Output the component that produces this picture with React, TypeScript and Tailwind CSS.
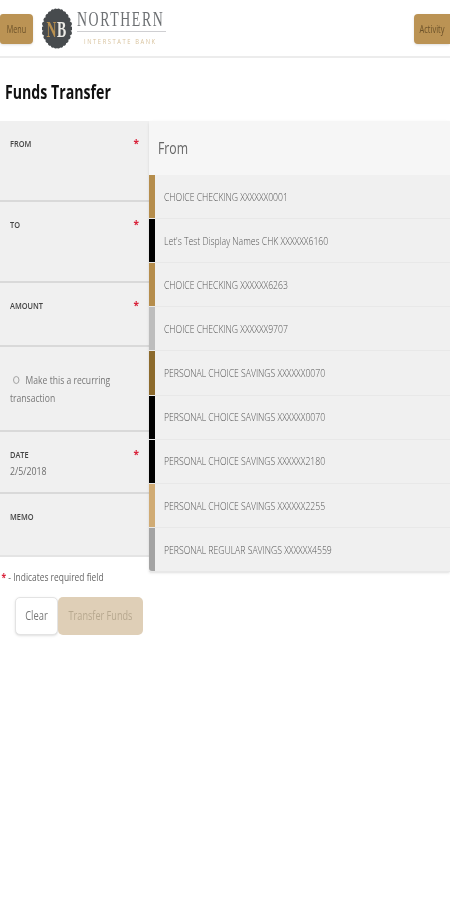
import React from 'react';

const accounts = [
  { name: 'CHOICE CHECKING XXXXXX0001', bar: 'bg-[#b58d4c]' },
  { name: "Let's Test Display Names CHK XXXXXX6160", bar: 'bg-black' },
  { name: 'CHOICE CHECKING XXXXXX6263', bar: 'bg-[#b58d4c]' },
  { name: 'CHOICE CHECKING XXXXXX9707', bar: 'bg-[#bdbdbd]' },
  { name: 'PERSONAL CHOICE SAVINGS XXXXXX0070', bar: 'bg-[#8c6a2c]' },
  { name: 'PERSONAL CHOICE SAVINGS XXXXXX0070', bar: 'bg-black' },
  { name: 'PERSONAL CHOICE SAVINGS XXXXXX2180', bar: 'bg-black' },
  { name: 'PERSONAL CHOICE SAVINGS XXXXXX2255', bar: 'bg-[#d0ab74]' },
  { name: 'PERSONAL REGULAR SAVINGS XXXXXX4559', bar: 'bg-[#a3a3a3]' },
];

// scalloped oval outline of the badge
const badgePath = () => {
  const count = 26;
  const points = Array.from({ length: count }, (_, i) => {
    const a = (i / count) * Math.PI * 2 - Math.PI / 2;
    const x = 15 + 13.6 * Math.cos(a);
    const y = 20.5 + 19.6 * Math.sin(a);
    return `${x.toFixed(2)} ${y.toFixed(2)}`;
  });
  return `M${points[0]} ` + [...points.slice(1), points[0]].map(p => `A2.4 2.4 0 0 1 ${p}`).join(' ') + 'Z';
};

const Logo = () => (
  <div className="flex items-start">
    <svg width="30" height="41" viewBox="0 0 30 41" className="shrink-0">
      <path d={badgePath()} fill="#474b4e" />
      <g fontFamily="'Liberation Serif', serif" fontSize="23" fontWeight="bold">
        <text transform="translate(4.500 28.500) scale(0.6 1)" fill="#b8904f">N</text>
        <text transform="translate(15 28.500) scale(0.6 1)" fill="#ecebe6">B</text>
      </g>
    </svg>
    <div className="w-[89px] ml-[5px] pt-[1px]">
      <div className="h-[20px] origin-left scale-x-[0.66] font-['Liberation_Serif',serif] text-[21px] leading-[20px] tracking-[2.4px] text-[#6d7073] whitespace-nowrap">
        NORTHERN
      </div>
      <div className="w-full h-px bg-[#cfcfd2] mt-[2px]" />
      <div className="ml-[7px] mt-[4px] h-[9px] origin-left scale-x-[0.72] font-['Open_Sans',sans-serif] text-[8px] leading-[9px] tracking-[2.2px] text-[#d8c39e] whitespace-nowrap">
        INTERSTATE BANK
      </div>
    </div>
  </div>
);

const Field = ({
  label,
  required,
  value,
  className,
}: {
  label: string;
  required?: boolean;
  value?: string;
  className: string;
}) => (
  <div className={`bg-[#f0f0f0] border-b-2 border-[#d9d9d9] pl-[10px] pr-[10px] pt-[16px] ${className}`}>
    <div className="flex justify-between">
      <span className="origin-left scale-x-[0.78] text-[9.5px] leading-[14px] font-semibold text-[#444]">{label}</span>
      {required && <span className="text-[10px] leading-[12px] font-bold text-[#d9223a]">*</span>}
    </div>
    {value && (
      <div className="-mt-[1px] origin-left scale-x-[0.8] text-[11px] leading-[20px] text-[#707070]">{value}</div>
    )}
  </div>
);

export default function App() {
  return (
    <div className="min-h-[900px] bg-white font-['Open_Sans',sans-serif] blur-[0.4px]">
      <header className="h-[58px] border-b-2 border-[#ececec] pt-[14px] flex justify-between items-start">
        <div className="flex items-start gap-[9px]">
          <button className="w-[33px] h-[30px] rounded-r-[4px] rounded-l-[3px] bg-[#bb9354] text-[#6b5129] shadow-sm">
            <span className="block scale-x-[0.72] text-[10px]">Menu</span>
          </button>
          <div className="-mt-[6px]">
            <Logo />
          </div>
        </div>
        <button className="w-[36px] h-[30px] rounded-l-[4px] bg-[#bb9354] text-[#6b5129] shadow-sm">
          <span className="block scale-x-[0.75] text-[10px]">Activity</span>
        </button>
      </header>

      <h1 className="ml-[5px] mt-[22px] h-[41px] origin-left scale-x-[0.745] text-[19px] leading-[25px] font-bold text-[#111]">
        Funds Transfer
      </h1>

      <div className="flex items-start">
        <div className="w-[149px] shrink-0">
          <Field label="FROM" required className="h-[81px]" />
          <Field label="TO" required className="h-[81px]" />
          <Field label="AMOUNT" required className="h-[64px]" />
          <div className="h-[85px] bg-[#f0f0f0] border-b-2 border-[#d9d9d9] pl-[10px] pt-[24px] overflow-hidden">
            <div className="w-[170px] origin-left scale-x-[0.78] text-[11px] leading-[18px] text-[#777]">
              <span className="inline-block w-[8px] h-[8px] rounded-full border border-[#999] ml-[4px] mr-[8px]" />
              Make this a recurring
              <br />
              transaction
            </div>
          </div>
          <Field label="DATE" required value="2/5/2018" className="h-[62px]" />
          <Field label="MEMO" className="h-[63px] border-[#e4e4e4]" />

          <div className="pl-[2px] mt-[13px] w-[170px] origin-left scale-x-[0.8] text-[10.5px] leading-[14px] text-[#666]">
            <span className="text-[#d9223a] font-bold">*</span> - Indicates required field
          </div>
          <div className="flex pl-[15px] mt-[13px]">
            <button className="w-[43px] h-[38px] rounded-[5px] bg-white border border-[#e3e3e3] shadow-sm text-[#777]">
              <span className="block scale-x-[0.78] text-[12px]">Clear</span>
            </button>
            <button className="w-[85px] h-[38px] rounded-[5px] bg-[#dfcfb7] text-[#b7a88f]">
              <span className="block scale-x-[0.76] text-[12px] whitespace-nowrap">Transfer Funds</span>
            </button>
          </div>
        </div>

        <div className="flex-1 min-w-0 rounded-t-[3px] shadow-sm">
          <div className="h-[54px] bg-[#f6f6f6] pl-[9px] flex items-center">
            <span className="origin-left scale-x-[0.72] text-[17px] text-[#666]">From</span>
          </div>
          {accounts.map((account, i) => (
            <div key={i} className="h-[44.11px] bg-[#f0f0f0] border-b border-[#e8e8e8] flex">
              <div className={`w-[6px] shrink-0 ${account.bar} ${i === accounts.length - 1 ? 'rounded-bl-[3px]' : ''}`} />
              <div className="pl-[9px] pt-[1px] flex items-center">
                <span className="origin-left scale-x-[0.785] text-[11px] font-light text-[#555] whitespace-nowrap">
                  {account.name}
                </span>
              </div>
            </div>
          ))}
        </div>
      </div>
    </div>
  );
}
